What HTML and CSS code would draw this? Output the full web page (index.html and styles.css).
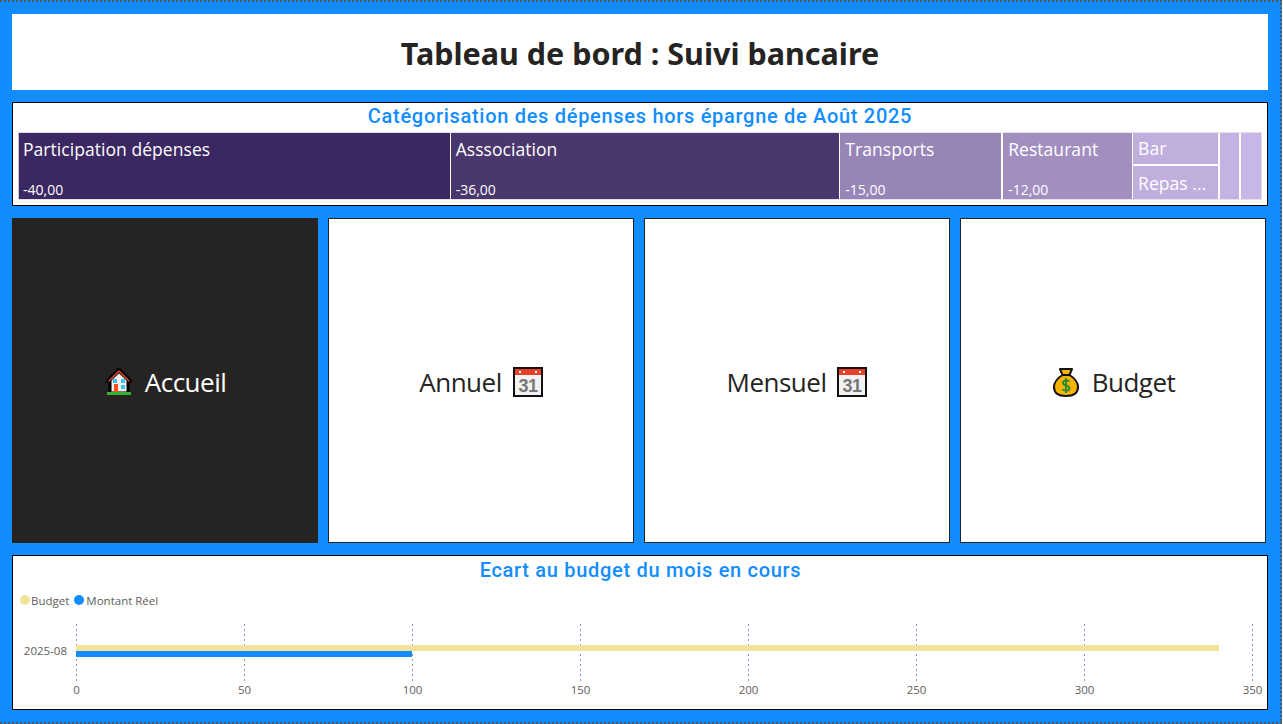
FILE: index.html
```html
<!DOCTYPE html>
<html lang="fr">
<head>
    <meta charset="UTF-8">
    <meta name="viewport" content="width=device-width, initial-scale=1.0">
    <title>Tableau de bord : Suivi bancaire</title>
    <link rel="stylesheet" href="styles.css">
</head>
<body>
    <div class="page">
        <header class="header">
            <h1>Tableau de bord : Suivi bancaire</h1>
        </header>

        <section class="panel treemap-panel">
            <h2 class="panel-title">Catégorisation des dépenses hors épargne de Août 2025</h2>
            <div class="treemap">
                <div class="cell c1"><span class="cell-name">Participation dépenses</span><span class="cell-value">-40,00</span></div>
                <div class="cell c2"><span class="cell-name">Asssociation</span><span class="cell-value">-36,00</span></div>
                <div class="cell c3"><span class="cell-name">Transports</span><span class="cell-value">-15,00</span></div>
                <div class="cell c4"><span class="cell-name">Restaurant</span><span class="cell-value">-12,00</span></div>
                <div class="stack">
                    <div class="cell c5"><span class="cell-name">Bar</span></div>
                    <div class="cell c5b"><span class="cell-name">Repas ...</span></div>
                </div>
                <div class="cell c6"></div>
                <div class="cell c7"></div>
            </div>
        </section>

        <nav class="nav">
            <a class="nav-btn active">
                <svg class="icon" viewBox="0 0 30 30">
                    <path d="M15 2 L6 11 V26 H24 V11 Z" fill="#f5f0ea" stroke="#000" stroke-width="3" stroke-linejoin="round"/>
                    <path d="M15 3.5 L4 14 M15 3.5 L26 14" stroke="#000" stroke-width="4" stroke-linecap="round"/>
                    <path d="M15 4 L5 14 M15 4 L25 14" stroke="#d9452f" stroke-width="1.6" stroke-linecap="round"/>
                    <rect x="3" y="25" width="24" height="3" fill="#34b233"/>
                    <rect x="9" y="12" width="4" height="4" fill="#37c3f5"/>
                    <rect x="17" y="12" width="4" height="4" fill="#37c3f5"/>
                    <rect x="17" y="18" width="4" height="4" fill="#37c3f5"/>
                    <rect x="10" y="17" width="4" height="8" fill="#f4511e"/>
                </svg>
                <span>Accueil</span>
            </a>
            <a class="nav-btn">
                <span>Annuel</span>
                <svg class="icon" viewBox="0 0 30 30">
                    <rect x="1" y="1" width="28" height="28" fill="#f2f2f2" stroke="#111" stroke-width="2"/>
                    <rect x="2" y="2" width="26" height="6" fill="#e8402a"/>
                    <rect x="6" y="4" width="2" height="2" fill="#fff"/>
                    <rect x="22" y="4" width="2" height="2" fill="#fff"/>
                    <text class="cal-day" x="15" y="25" text-anchor="middle">31</text>
                </svg>
            </a>
            <a class="nav-btn">
                <span>Mensuel</span>
                <svg class="icon" viewBox="0 0 30 30">
                    <rect x="1" y="1" width="28" height="28" fill="#f2f2f2" stroke="#111" stroke-width="2"/>
                    <rect x="2" y="2" width="26" height="6" fill="#e8402a"/>
                    <rect x="6" y="4" width="2" height="2" fill="#fff"/>
                    <rect x="22" y="4" width="2" height="2" fill="#fff"/>
                    <text class="cal-day" x="15" y="25" text-anchor="middle">31</text>
                </svg>
            </a>
            <a class="nav-btn">
                <svg class="icon" viewBox="0 0 30 30">
                    <path d="M9 2 H21 L18.5 8 C23.5 11 27 16 27 20 C27 26 22.5 29 15 29 C7.5 29 3 26 3 20 C3 16 6.5 11 11.5 8 Z" fill="#f9b300" stroke="#111" stroke-width="2" stroke-linejoin="round"/>
                    <path d="M11 8 H19" stroke="#111" stroke-width="2"/>
                    <path d="M18.5 14.5 C17.5 13 12.5 12.5 12 15.8 C11.5 19 18.8 18 18.5 21.5 C18.2 24.5 12.5 24 11.5 22.3 M15 11 V26" fill="none" stroke="#1a8a3a" stroke-width="1.8"/>
                </svg>
                <span>Budget</span>
            </a>
        </nav>

        <section class="panel chart-panel">
            <h2 class="panel-title">Ecart au budget du mois en cours</h2>
            <div class="legend">
                <span class="legend-item"><i class="dot dot-budget"></i>Budget</span>
                <span class="legend-item"><i class="dot dot-real"></i>Montant Réel</span>
            </div>
            <svg class="chart" width="1254" height="98" viewBox="0 0 1254 98">
                <g class="grid">
                    <line x1="62.5" y1="1" x2="62.5" y2="59"/>
                    <line x1="230.5" y1="1" x2="230.5" y2="59"/>
                    <line x1="398.5" y1="1" x2="398.5" y2="59"/>
                    <line x1="566.5" y1="1" x2="566.5" y2="59"/>
                    <line x1="734.5" y1="1" x2="734.5" y2="59"/>
                    <line x1="902.5" y1="1" x2="902.5" y2="59"/>
                    <line x1="1070.5" y1="1" x2="1070.5" y2="59"/>
                    <line x1="1238.5" y1="1" x2="1238.5" y2="59"/>
                </g>
                <rect x="62" y="22" width="1143" height="6" fill="#f2e29c"/>
                <rect x="62" y="28" width="336" height="6" fill="#118dff"/>
                <text class="tick" x="53" y="32" text-anchor="end">2025-08</text>
                <g class="tick" text-anchor="middle">
                    <text x="62.5" y="71">0</text>
                    <text x="230.5" y="71">50</text>
                    <text x="398.5" y="71">100</text>
                    <text x="566.5" y="71">150</text>
                    <text x="734.5" y="71">200</text>
                    <text x="902.5" y="71">250</text>
                    <text x="1070.5" y="71">300</text>
                    <text x="1238.5" y="71">350</text>
                </g>
            </svg>
        </section>
    </div>
</body>
</html>
```

FILE: styles.css
```css
* {
    box-sizing: border-box;
}
body {
    margin: 0;
    font-family: "Open Sans", Arial, sans-serif;
    background-color: #fff;
}
.page {
    width: 1282px;
    height: 724px;
    padding: 12px 12px 12px 12px;
    background-color: #118dff;
    border-top: 2px dotted #555;
    border-right: 2px dotted #555;
    border-bottom: 2px dotted #555;
    display: flex;
    flex-direction: column;
    gap: 12px;
    overflow: hidden;
}
.header {
    height: 76px;
    flex: none;
    background-color: #fff;
    display: flex;
    align-items: center;
    justify-content: center;
}
.header h1 {
    margin: 2px 0 0;
    font-family: "Noto Sans", Arial, sans-serif;
    font-size: 30.5px;
    font-weight: 700;
    color: #252423;
}
.panel {
    background-color: #fff;
    border: 1px solid #000;
    flex: none;
}
.panel-title {
    margin: 0;
    text-align: center;
    font-family: Roboto, Arial, sans-serif;
    font-size: 20px;
    font-weight: 500;
    line-height: 26px;
    letter-spacing: 0.7px;
    color: #118dff;
}
.treemap-panel {
    height: 104px;
    padding: 0 5px;
}
.treemap-panel .panel-title {
    margin-bottom: 3px;
}
.treemap {
    display: flex;
    gap: 1px;
    height: 68px;
    color: #fff;
    border: 1px solid #e4e0ee;
    border-left-color: #c9c5d6;
    width: 1244px;
}
.cell {
    display: flex;
    flex-direction: column;
    justify-content: space-between;
    padding: 4px 5px 0;
    overflow: hidden;
    white-space: nowrap;
}
.cell-name {
    font-size: 17.5px;
    line-height: 24px;
    letter-spacing: 0.05px;
}
.cell-value {
    font-size: 14px;
    line-height: 20px;
    margin-bottom: -1px;
}
.stack {
    width: 85px;
    display: flex;
    flex-direction: column;
    gap: 2px;
}
.stack .cell {
    flex: 1;
    padding-top: 3px;
}
.stack .c5b {
    padding-top: 5px;
}
.c1 { width: 431px; background-color: #3b2762; padding-left: 4px; }
.c2 { width: 389px; background-color: #4a376d; }
.c3 { width: 161px; background-color: #9885b7; margin-right: 1px; }
.c4 { width: 129px; background-color: #a28fc0; }
.c5 { background-color: #c0aedd; }
.c5b { background-color: #c0aedd; }
.c6 { width: 19px; margin-left: 1px; background-color: #c3b2e2; }
.c7 { width: 20px; margin-left: 1px; background-color: #c7b7e6; }
.nav {
    height: 325px;
    flex: none;
    display: flex;
    gap: 10px;
}
.nav-btn {
    width: 306px;
    background-color: #fff;
    border: 1px solid #252423;
    display: flex;
    align-items: center;
    justify-content: center;
    gap: 11px;
    padding-top: 2px;
    font-size: 26px;
    font-weight: 400;
    letter-spacing: -0.5px;
    color: #252423;
}
.nav-btn.active {
    background-color: #252423;
    color: #fff;
}
.icon {
    width: 30px;
    height: 30px;
    flex: none;
}
.cal-day {
    font-family: "Liberation Sans", Arial, sans-serif;
    font-size: 18px;
    font-weight: 700;
    fill: #777;
}
.chart-panel {
    height: 155px;
    padding-left: 1px;
    outline: 1px solid #fff;
    outline-offset: -2px;
}
.chart-panel .panel-title {
    height: 28px;
    line-height: 28px;
}
.legend {
    display: flex;
    gap: 5px;
    height: 39px;
    padding: 8px 0 0 6px;
    font-size: 11.5px;
    color: #605e5c;
}
.legend-item {
    display: flex;
    align-items: center;
    height: 16px;
    gap: 2px;
}
.legend-item:first-child {
    gap: 1px;
}
.dot {
    width: 10px;
    height: 10px;
    border-radius: 50%;
}
.dot-budget { background-color: #f2e29c; }
.dot-real { background-color: #118dff; }
.chart {
    display: block;
}
.grid line {
    stroke: #8f8fd8;
    stroke-width: 1;
    stroke-dasharray: 2 3;
}
.tick {
    font-family: "Open Sans", Arial, sans-serif;
    font-size: 11.5px;
    fill: #605e5c;
}
```
